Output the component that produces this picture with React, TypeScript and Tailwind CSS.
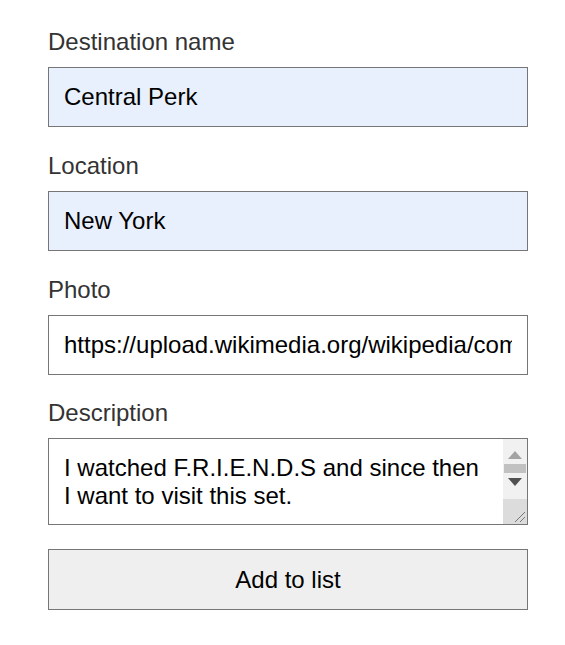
import { useState } from "react";

const labelCls = "block text-[24px] leading-[28px] text-[#333333] mb-[11px]";
const inputCls =
  "block w-full h-[60px] border border-[#767676] px-[15px] text-[24px] text-black outline-none";

const App = () => {
  const [name, setName] = useState("Central Perk");
  const [location, setLocation] = useState("New York");
  const [photo, setPhoto] = useState(
    "https://upload.wikimedia.org/wikipedia/commons/central_perk_set.jpg"
  );
  const [description, setDescription] = useState(
    "I watched F.R.I.E.N.D.S and since then I want to visit this set."
  );

  return (
    <div
      className="min-h-screen bg-white pl-12 pt-[28px]"
      style={{ fontFamily: '"Liberation Sans", Arial, sans-serif' }}
    >
      <form
        className="w-[480px] flex flex-col"
        onSubmit={(e) => e.preventDefault()}
      >
        <label className={labelCls}>Destination name</label>
        <input
          className={`${inputCls} bg-[#e8f0fe]`}
          value={name}
          onChange={(e) => setName(e.target.value)}
        />

        <label className={`${labelCls} mt-[25px]`}>Location</label>
        <input
          className={`${inputCls} bg-[#e8f0fe]`}
          value={location}
          onChange={(e) => setLocation(e.target.value)}
        />

        <label className={`${labelCls} mt-[25px]`}>Photo</label>
        <input
          className={`${inputCls} bg-white`}
          value={photo}
          onChange={(e) => setPhoto(e.target.value)}
        />

        <label className={`${labelCls} mt-[24px]`}>Description</label>
        <div className="relative">
          <textarea
            className="block w-full h-[87px] border border-[#767676] pl-[15px] pr-[40px] pt-[15px] pb-[15px] text-[24px] leading-[28px] text-black resize-none overflow-hidden outline-none"
            value={description}
            onChange={(e) => setDescription(e.target.value)}
          />
          {/* fake classic scrollbar */}
          <div className="absolute top-px bottom-px right-px w-[24px] bg-[#f1f1f1] flex flex-col items-center pointer-events-none">
            <div className="h-[12px]" />
            <svg width="14" height="8" viewBox="0 0 14 8">
              <polygon points="7,0 14,8 0,8" fill="#a3a3a3" />
            </svg>
            <div className="mt-[5px] w-[22px] h-[9px] bg-[#c1c1c1]" />
            <svg width="14" height="8" viewBox="0 0 14 8" className="mt-[5px]">
              <polygon points="0,0 14,0 7,8" fill="#505050" />
            </svg>
            <div className="mt-auto w-full h-[25px] bg-[#dcdcdc] relative">
              <svg
                width="14"
                height="14"
                viewBox="0 0 14 14"
                className="absolute right-[1px] bottom-[1px]"
              >
                <line x1="13" y1="3" x2="3" y2="13" stroke="#777" strokeWidth="1" />
                <line x1="13" y1="8" x2="8" y2="13" stroke="#777" strokeWidth="1" />
              </svg>
            </div>
          </div>
        </div>

        <button
          type="submit"
          className="mt-[24px] h-[61px] w-full border border-[#767676] bg-[#efefef] text-[24px] text-black"
        >
          Add to list
        </button>
      </form>
    </div>
  );
};

export default App;
